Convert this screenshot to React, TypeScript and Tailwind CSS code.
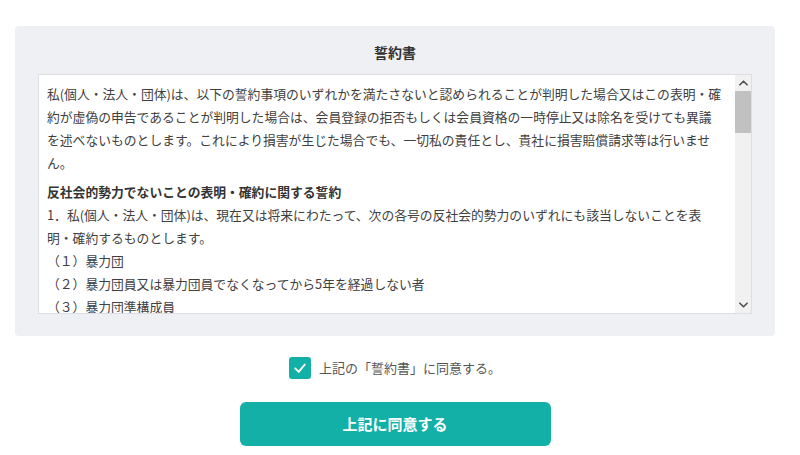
import { useState } from "react";

const jp = { fontFamily: '"Noto Sans CJK JP", "Noto Sans", sans-serif' };

const intro = [
  "私(個人・法人・団体)は、以下の誓約事項のいずれかを満たさないと認められることが判明した場合又はこの表明・確",
  "約が虚偽の申告であることが判明した場合は、会員登録の拒否もしくは会員資格の一時停止又は除名を受けても異議",
  "を述べないものとします。これにより損害が生じた場合でも、一切私の責任とし、貴社に損害賠償請求等は行いませ",
  "ん。",
];

const clause = [
  "1．私(個人・法人・団体)は、現在又は将来にわたって、次の各号の反社会的勢力のいずれにも該当しないことを表",
  "明・確約するものとします。",
];

const items = [
  "（１）暴力団",
  "（２）暴力団員又は暴力団員でなくなってから5年を経過しない者",
  "（３）暴力団準構成員",
];

function Chevron({ up }: { up?: boolean }) {
  return (
    <svg viewBox="0 0 10 6" className="h-[6px] w-[9px]" aria-hidden="true">
      <polyline
        points={up ? "1,5 5,1 9,5" : "1,1 5,5 9,1"}
        fill="none"
        stroke="#505050"
        strokeWidth="1.8"
        strokeLinecap="round"
        strokeLinejoin="round"
      />
    </svg>
  );
}

function Scrollbar() {
  return (
    <div className="flex w-[16px] shrink-0 flex-col bg-[#f1f1f1]">
      <div className="flex h-[16px] items-center justify-center">
        <Chevron up />
      </div>
      <div className="h-[42px] bg-[#c1c1c1]" />
      <div className="flex-1" />
      <div className="flex h-[16px] items-center justify-center">
        <Chevron />
      </div>
    </div>
  );
}

export default function App() {
  const [agreed, setAgreed] = useState(true);

  return (
    <div className="min-h-[455px] bg-white pt-[26px]" style={jp}>
      <div className="ml-[15px] w-[760px]">
        <div className="rounded-[4px] bg-[#eef0f4] px-[23px] pb-[22px] pt-[16px]">
          <h2 className="mb-[12px] text-center text-[14px] font-bold leading-[20px] text-[#333]">誓約書</h2>
          <div className="flex h-[240px] border border-[#dcdee3] bg-white">
            <div className="flex-1 overflow-hidden pl-[8px] pt-[7px] text-[12.8px] leading-[23px] text-[#404040]">
              {intro.map((line) => (
                <div key={line} className="whitespace-nowrap">{line}</div>
              ))}
              <div className="mt-[6px] whitespace-nowrap font-bold text-[#333]">反社会的勢力でないことの表明・確約に関する誓約</div>
              {clause.map((line) => (
                <div key={line} className="whitespace-nowrap">{line}</div>
              ))}
              {items.map((line) => (
                <div key={line} className="whitespace-nowrap">{line}</div>
              ))}
            </div>
            <Scrollbar />
          </div>
        </div>

        <label className="mt-[21px] flex cursor-pointer items-center justify-center gap-[8px]">
          <button
            type="button"
            onClick={() => setAgreed(!agreed)}
            className={`flex h-[22px] w-[22px] items-center justify-center rounded-[3px] ${agreed ? "bg-[#13b0a8]" : "border border-[#ccc] bg-white"}`}
          >
            {agreed && (
              <svg viewBox="0 0 16 16" className="h-[14px] w-[14px]" aria-hidden="true">
                <polyline points="2.5,8.5 6.5,12.5 13.5,4" fill="none" stroke="#fff" strokeWidth="2.2" strokeLinecap="round" strokeLinejoin="round" />
              </svg>
            )}
          </button>
          <span className="text-[13px] leading-[22px] text-[#555]">上記の「誓約書」に同意する。</span>
        </label>

        <div className="mt-[23px] flex justify-center">
          <button
            type="button"
            className="h-[44px] w-[311px] rounded-[6px] bg-[#13b0a8] text-[15px] font-bold text-white"
          >
            上記に同意する
          </button>
        </div>
      </div>
    </div>
  );
}
